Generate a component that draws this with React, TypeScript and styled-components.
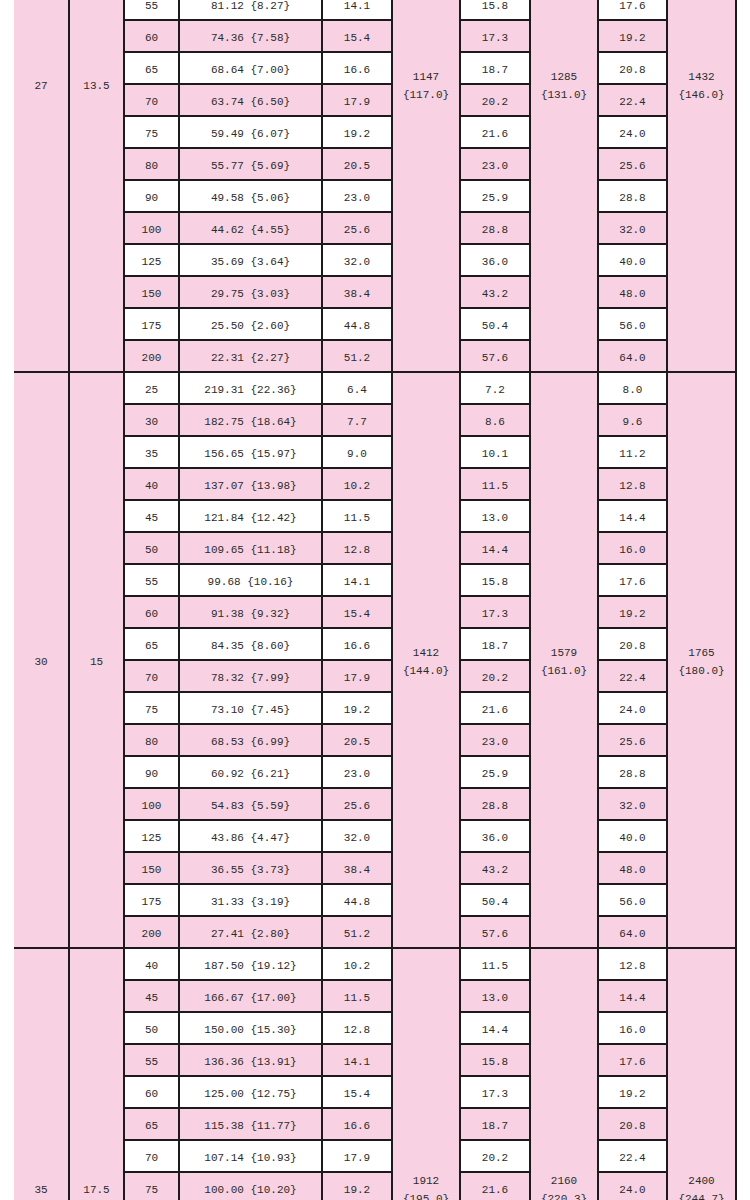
import styled, { createGlobalStyle } from 'styled-components';

const GlobalStyle = createGlobalStyle`
  html, body {
    margin: 0;
    padding: 0;
    background: #ffffff;
  }
`;

const LENGTHS = [25, 30, 35, 40, 45, 50, 55, 60, 65, 70, 75, 80, 90, 100, 125, 150, 175, 200];
const COL5 = ['6.4', '7.7', '9.0', '10.2', '11.5', '12.8', '14.1', '15.4', '16.6', '17.9', '19.2', '20.5', '23.0', '25.6', '32.0', '38.4', '44.8', '51.2'];
const COL7 = ['7.2', '8.6', '10.1', '11.5', '13.0', '14.4', '15.8', '17.3', '18.7', '20.2', '21.6', '23.0', '25.9', '28.8', '36.0', '43.2', '50.4', '57.6'];
const COL9 = ['8.0', '9.6', '11.2', '12.8', '14.4', '16.0', '17.6', '19.2', '20.8', '22.4', '24.0', '25.6', '28.8', '32.0', '40.0', '48.0', '56.0', '64.0'];

type Group = {
  size: string;
  half: string;
  from: number;
  load: string[];
  totals: [string, string][];
};

const GROUPS: Group[] = [
  {
    size: '27',
    half: '13.5',
    from: 0,
    load: [
      '178.46 {18.20}', '148.72 {15.17}', '127.47 {13.00}', '111.54 {11.37}', '99.15 {10.11}', '89.23 {9.10}',
      '81.12 {8.27}', '74.36 {7.58}', '68.64 {7.00}', '63.74 {6.50}', '59.49 {6.07}', '55.77 {5.69}',
      '49.58 {5.06}', '44.62 {4.55}', '35.69 {3.64}', '29.75 {3.03}', '25.50 {2.60}', '22.31 {2.27}',
    ],
    totals: [['1147', '{117.0}'], ['1285', '{131.0}'], ['1432', '{146.0}']],
  },
  {
    size: '30',
    half: '15',
    from: 0,
    load: [
      '219.31 {22.36}', '182.75 {18.64}', '156.65 {15.97}', '137.07 {13.98}', '121.84 {12.42}', '109.65 {11.18}',
      '99.68 {10.16}', '91.38 {9.32}', '84.35 {8.60}', '78.32 {7.99}', '73.10 {7.45}', '68.53 {6.99}',
      '60.92 {6.21}', '54.83 {5.59}', '43.86 {4.47}', '36.55 {3.73}', '31.33 {3.19}', '27.41 {2.80}',
    ],
    totals: [['1412', '{144.0}'], ['1579', '{161.0}'], ['1765', '{180.0}']],
  },
  {
    size: '35',
    half: '17.5',
    from: 3,
    load: [
      '187.50 {19.12}', '166.67 {17.00}', '150.00 {15.30}', '136.36 {13.91}', '125.00 {12.75}', '115.38 {11.77}',
      '107.14 {10.93}', '100.00 {10.20}', '93.75 {9.56}', '83.33 {8.50}', '75.00 {7.65}', '60.00 {6.12}',
      '50.00 {5.10}', '42.86 {4.37}', '37.50 {3.82}',
    ],
    totals: [['1912', '{195.0}'], ['2160', '{220.3}'], ['2400', '{244.7}']],
  },
];

const WIDTHS = [55, 55, 55, 143, 70, 68, 70, 68, 69, 69];

export default function App() {
  return (
    <Page>
      <GlobalStyle />
      <Sheet>
        <colgroup>
          {WIDTHS.map((w, i) => (
            <col key={i} style={{ width: w }} />
          ))}
        </colgroup>
        <tbody>
          {GROUPS.map((g) => {
            const span = g.load.length;
            return g.load.map((load, i) => {
              const k = g.from + i;
              const tone = i % 2 === 0 ? 'white' : 'pink';
              return (
                <tr key={g.size + '-' + i}>
                  {i === 0 && (
                    <>
                      <Cell rowSpan={span} $tone='pink' $edge>
                        {g.size}
                      </Cell>
                      <Cell rowSpan={span} $tone='pink'>
                        {g.half}
                      </Cell>
                    </>
                  )}
                  <Cell $tone={tone}>{LENGTHS[k]}</Cell>
                  <Cell $tone={tone}>{load}</Cell>
                  <Cell $tone={tone}>{COL5[k]}</Cell>
                  {i === 0 && (
                    <Merged rowSpan={span}>
                      {g.totals[0][0]}
                      <br />
                      {g.totals[0][1]}
                    </Merged>
                  )}
                  <Cell $tone={tone}>{COL7[k]}</Cell>
                  {i === 0 && (
                    <Merged rowSpan={span}>
                      {g.totals[1][0]}
                      <br />
                      {g.totals[1][1]}
                    </Merged>
                  )}
                  <Cell $tone={tone}>{COL9[k]}</Cell>
                  {i === 0 && (
                    <Merged rowSpan={span}>
                      {g.totals[2][0]}
                      <br />
                      {g.totals[2][1]}
                    </Merged>
                  )}
                </tr>
              );
            });
          })}
        </tbody>
      </Sheet>
    </Page>
  );
}

const Page = styled.div`
  width: 750px;
  height: 1200px;
  overflow: hidden;
  background: #ffffff;
`;

const Sheet = styled.table`
  margin-top: -205px;
  margin-left: 14px;
  width: 722px;
  table-layout: fixed;
  border-collapse: collapse;
  font-family: 'Liberation Mono', 'DejaVu Sans Mono', monospace;
  font-size: 11px;
  color: #2b2b2b;
`;

const Cell = styled.td<{ $tone: string; $edge?: boolean }>`
  height: 27px;
  padding: 3px 0 0;
  text-align: center;
  vertical-align: middle;
  white-space: pre;
  border: 2px solid #1c1a1c;
  ${(p) => (p.$edge ? 'border-left: none;' : '')}
  background: ${(p) => (p.$tone === 'pink' ? '#f8d2e3' : '#ffffff')};
`;

const Merged = styled.td`
  padding: 4px 0 0;
  text-align: center;
  vertical-align: middle;
  line-height: 18px;
  border: 2px solid #1c1a1c;
  background: #f8d2e3;
`;
